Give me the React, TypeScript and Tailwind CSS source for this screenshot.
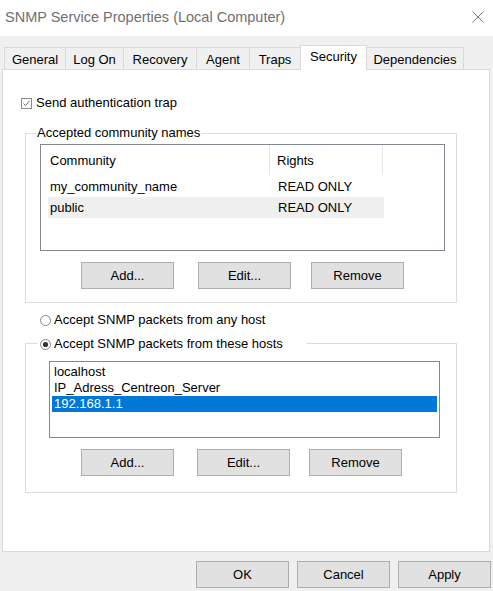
import React from "react";

const Btn = ({ label, className = "" }: { label: string; className?: string }) => (
  <div
    className={`w-[93px] h-[27px] flex items-center justify-center bg-[#e1e1e1] border border-[#adadad] text-[13px] text-black ${className}`}
  >
    {label}
  </div>
);

const tabs = [
  { name: "General", w: "w-[62px]" },
  { name: "Log On", w: "w-[59px]" },
  { name: "Recovery", w: "w-[74px]" },
  { name: "Agent", w: "w-[54px]" },
  { name: "Traps", w: "w-[52px]" },
  { name: "Security", w: "w-[67px]", sel: true },
  { name: "Dependencies", w: "w-[98px]" },
];

const Radio = ({ checked }: { checked?: boolean }) => (
  <svg width="11" height="11" viewBox="0 0 11 11" className="shrink-0">
    <circle cx="5.5" cy="5.5" r="5" fill="#fff" stroke="#8a8a8a" strokeWidth="1" />
    {checked && <circle cx="5.5" cy="5.5" r="2.6" fill="#333" />}
  </svg>
);

export default function App() {
  return (
    <div
      className="w-[493px] h-[591px] bg-[#f0f0f0] overflow-hidden text-black text-[13px] leading-[16px]"
      style={{ fontFamily: '"Liberation Sans", Arial, sans-serif' }}
    >
      {/* Title bar */}
      <div className="h-[36px] bg-white flex items-center justify-between pl-[5px] pr-[9px]">
        <span className="text-[14.5px] text-[#707070] -mt-[2px]">SNMP Service Properties (Local Computer)</span>
        <svg width="12" height="12" viewBox="0 0 12 12" className="-mt-[2px]">
          <path d="M0.5 0.5 L11.5 11.5 M11.5 0.5 L0.5 11.5" stroke="#7a7a7a" strokeWidth="1" />
        </svg>
      </div>

      {/* Tabs */}
      <div className="h-[33px] flex items-end pl-[4px]">
        {tabs.map((t, i) =>
          t.sel ? (
            <div
              key={t.name}
              className={`${t.w} h-[25px] -mb-px relative z-10 bg-white border border-b-0 border-[#d9d9d9] flex justify-center pt-[3px] ${i > 0 ? "-ml-px" : ""}`}
            >
              {t.name}
            </div>
          ) : (
            <div
              key={t.name}
              className={`${t.w} h-[22px] bg-[#f0f0f0] border border-b-0 border-[#d9d9d9] flex justify-center pt-[4px] ${i > 0 ? "-ml-px" : ""}`}
            >
              {t.name}
            </div>
          )
        )}
      </div>

      {/* Panel */}
      <div className="ml-[2px] w-[488px] h-[483px] bg-white border border-[#d9d9d9] flex flex-col">
        {/* checkbox */}
        <div className="mt-[25px] ml-[18px] h-[16px] flex items-center">
          <svg width="11" height="11" viewBox="0 0 11 11" className="shrink-0">
            <rect x="0.5" y="0.5" width="10" height="10" fill="#fff" stroke="#8a8a8a" />
            <path d="M2.5 5.5 L4.5 7.5 L8.5 3" fill="none" stroke="#6a6a6a" strokeWidth="1" />
          </svg>
          <span className="ml-[4px]">Send authentication trap</span>
        </div>

        {/* group 1 */}
        <div className="mt-[22px] ml-[22px] w-[432px] h-[170px] border border-[#dcdcdc] flex flex-col">
          <div className="-mt-[9px] h-[16px] flex">
            <span className="ml-[10px] px-[1px] bg-white">Accepted community names</span>
          </div>
          <div className="mt-[3px] ml-[14px] w-[405px] h-[107px] border border-[#828790] bg-white flex flex-col">
            <div className="h-[31px] flex">
              <div className="w-[229px] pl-[9px] pt-[8px] border-r border-[#e5e5e5] h-[30px]">Community</div>
              <div className="w-[113px] pl-[7px] pt-[8px] border-r border-[#e5e5e5] h-[30px]">Rights</div>
            </div>
            <div className="ml-[7px] w-[336px] h-[21px] flex items-center">
              <span className="w-[230px] pl-[2px]">my_community_name</span>
              <span>READ ONLY</span>
            </div>
            <div className="ml-[7px] w-[336px] h-[21px] flex items-center bg-[#efefef]">
              <span className="w-[230px] pl-[2px]">public</span>
              <span>READ ONLY</span>
            </div>
          </div>
          <div className="mt-[11px] flex">
            <Btn label="Add..." className="ml-[55px]" />
            <Btn label="Edit..." className="ml-[24px]" />
            <Btn label="Remove" className="ml-[20px]" />
          </div>
        </div>

        {/* radio any host */}
        <div className="mt-[9px] ml-[37px] h-[16px] flex items-center">
          <Radio />
          <span className="ml-[3px]">Accept SNMP packets from any host</span>
        </div>

        {/* group 2 */}
        <div className="mt-[15px] ml-[22px] w-[432px] h-[150px] border border-[#dcdcdc] flex flex-col">
          <div className="-mt-[8px] h-[16px] flex">
            <div className="ml-[12px] w-[268px] bg-white flex items-center pl-[2px]">
              <Radio checked />
              <span className="ml-[3px]">Accept SNMP packets from these hosts</span>
            </div>
          </div>
          <div className="mt-[9px] ml-[23px] w-[391px] h-[77px] border border-[#828790] bg-white pt-[2px] flex flex-col">
            <div className="mx-[2px] h-[16px] pl-[2px] flex items-center">localhost</div>
            <div className="mx-[2px] h-[16px] pl-[2px] flex items-center">IP_Adress_Centreon_Server</div>
            <div className="mx-[2px] h-[16px] pl-[2px] flex items-center bg-[#0078d7] text-white">192.168.1.1</div>
          </div>
          <div className="mt-[11px] flex">
            <Btn label="Add..." className="ml-[55px]" />
            <Btn label="Edit..." className="ml-[23px]" />
            <Btn label="Remove" className="ml-[19px]" />
          </div>
        </div>
      </div>

      {/* bottom buttons */}
      <div className="mt-[9px] flex justify-end pr-[2px] gap-[8px]">
        <Btn label="OK" />
        <Btn label="Cancel" />
        <Btn label="Apply" />
      </div>
    </div>
  );
}
